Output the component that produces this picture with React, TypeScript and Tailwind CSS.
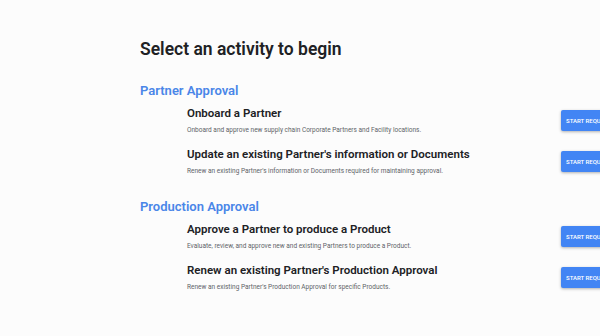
const SECTIONS = [
  {
    name: "Partner Approval",
    items: [
      {
        title: "Onboard a Partner",
        desc: "Onboard and approve new supply chain Corporate Partners and Facility locations.",
      },
      {
        title: "Update an existing Partner's information or Documents",
        desc: "Renew an existing Partner's information or Documents required for maintaining approval.",
      },
    ],
  },
  {
    name: "Production Approval",
    items: [
      {
        title: "Approve a Partner to produce a Product",
        desc: "Evaluate, review, and approve new and existing Partners to produce a Product.",
      },
      {
        title: "Renew an existing Partner's Production Approval",
        desc: "Renew an existing Partner's Production Approval for specific Products.",
      },
    ],
  },
];

export default function App() {
  return (
    <div
      className="w-[600px] h-[336px] overflow-hidden bg-[#fcfcfc] text-[#202124]"
      style={{ fontFamily: "Roboto, 'Liberation Sans', sans-serif" }}
    >
      <div className="w-[641px] pl-[140px] pt-[37px]">
        <h1 className="text-[17.5px] leading-[24px] font-semibold">Select an activity to begin</h1>

        {SECTIONS.map((s, si) => (
          <div key={s.name} className={si === 0 ? "mt-[20px]" : "mt-[21px]"}>
            <h2 className="text-[13px] leading-[20px] font-semibold text-[#4a86e8]">{s.name}</h2>
            <div className="mt-[4px] flex flex-col gap-[11px]">
              {s.items.map((it) => (
                <div key={it.title} className="flex items-center">
                  <div className="flex-1 pl-[47px]">
                    <div className="text-[11.5px] leading-[16px] font-semibold">{it.title}</div>
                    <div className="mt-[4px] text-[6.5px] leading-[10px] text-[#606368]">{it.desc}</div>
                  </div>
                  <button className="h-[21px] w-[80px] shrink-0 rounded-[2px] bg-[#4285f4] pl-[5px] text-left text-[6px] leading-[21px] font-medium text-white shadow-[0_1px_3px_rgba(0,0,0,0.3)]">
                    START REQUEST
                  </button>
                </div>
              ))}
            </div>
          </div>
        ))}
      </div>
    </div>
  );
}
